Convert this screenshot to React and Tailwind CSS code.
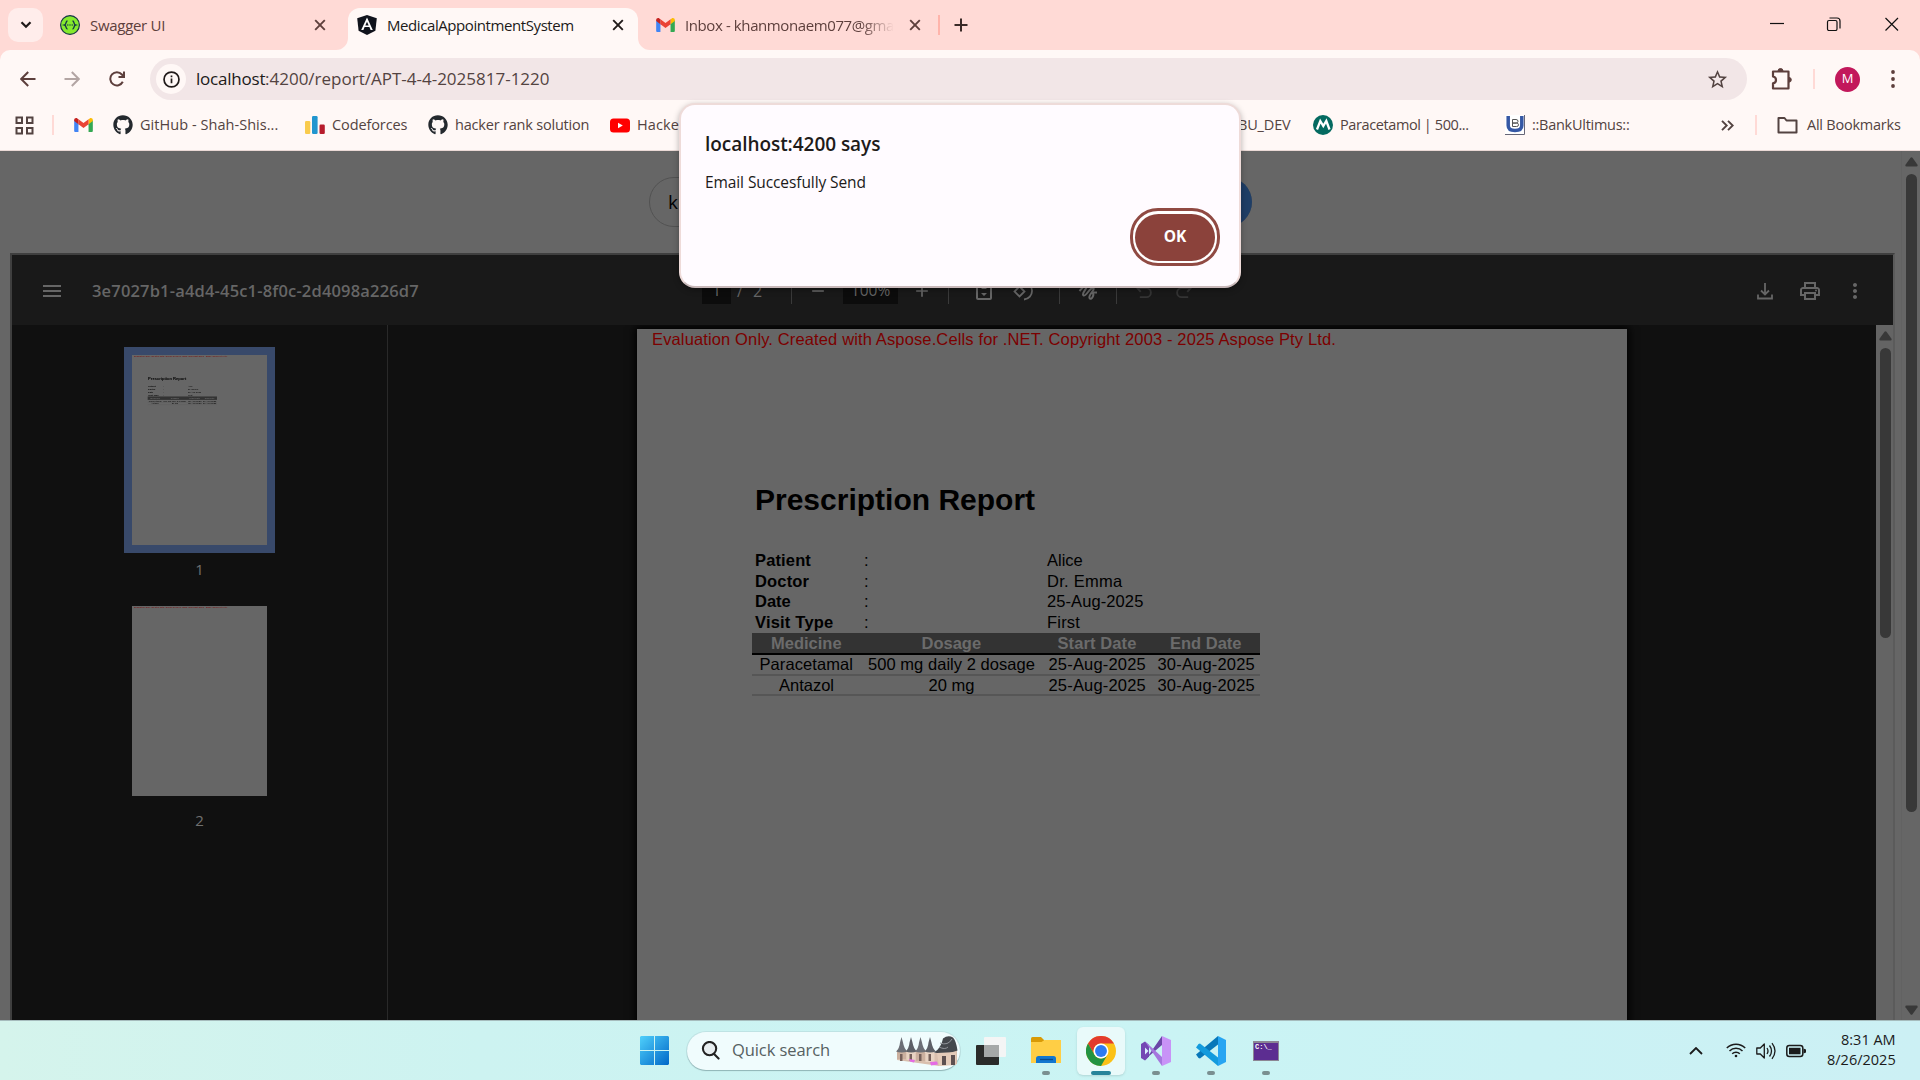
import React, { useLayoutEffect, useRef, useState } from "react";
import { FaGithub } from "react-icons/fa";
import { MdMenu, MdOutlinePrint, MdMoreVert, MdAdd, MdRemove, MdStarBorder } from "react-icons/md";

// One line of text whose letter spacing is adjusted to fill a fixed width.
function Fit({ w, className = "", children }) {
  const ref = useRef(null);
  const [spacing, setSpacing] = useState(0);
  useLayoutEffect(() => {
    const natural = ref.current.offsetWidth;
    setSpacing((w - natural) / String(children).length);
  }, [w, children]);
  return (
    <span className={"block shrink-0 whitespace-nowrap " + className} style={{ width: w }}>
      <span ref={ref} className="inline-block" style={{ letterSpacing: spacing }}>
        {children}
      </span>
    </span>
  );
}

function Cross({ className = "" }) {
  return (
    <svg viewBox="0 0 12 12" className={"h-3 w-3 shrink-0 " + className} fill="none" stroke="currentColor" strokeWidth="1.9">
      <path d="M1.2 1.2l9.6 9.6M10.8 1.2L1.2 10.8" />
    </svg>
  );
}

function Gmail({ className = "" }) {
  return (
    <svg viewBox="0 0 24 18" className={"shrink-0 " + className}>
      <path d="M0 3v13.4C0 17.300.7 18 1.600 18H5.500V8L2.600 3z" fill="#4285f4" />
      <path d="M18.500 18h3.900c.9 0 1.600-.7 1.600-1.600V3l-3 1-2.500 4z" fill="#34a853" />
      <path d="M18.500 1.600V8L24 4V2.500c0-2-2.300-3.200-4-2z" fill="#fbbc04" />
      <path d="M5.500 8V1.500L12 6.400l6.500-4.900V8L12 13z" fill="#ea4335" />
      <path d="M0 2.500V4l5.500 4V1.500L4 .5C2.300-.7 0 .5 0 2.500z" fill="#c5221f" />
    </svg>
  );
}

function Swagger() {
  return (
    <svg viewBox="0 0 20 20" className="h-5 w-5 shrink-0" fill="none" stroke="#173647">
      <circle cx="10" cy="10" r="9.400" fill="#85ea2d" strokeWidth="1.200" />
      <path d="M7.500 6C5.500 6 6.500 9.500 4.600 10c1.900.5.9 4 2.900 4M12.500 6c2 0 1 3.500 2.900 4-1.900.5-.9 4-2.900 4" strokeWidth="1.400" />
      <path d="M7.300 10h1M9.500 10h1M11.700 10h1" strokeWidth="1.300" />
    </svg>
  );
}

function Angular() {
  return (
    <svg viewBox="0 0 20 20" className="h-5 w-5 shrink-0">
      <path d="M10 0l9.800 3.300-1.400 12.400L10 20l-8.400-4.300L.2 3.300z" fill="#10131c" />
      <path d="M10 2.500L4.200 15h2.200l1.200-2.900h4.800l1.200 2.900h2.200zm0 4.200l1.700 3.700H8.300z" fill="#fff" />
    </svg>
  );
}

function Bar({ className = "" }) {
  return <div className={"shrink-0 " + className} />;
}

function TabStrip() {
  return (
    <div className="flex h-[50px] bg-[#ffdad6] pl-2 text-[15px] text-[#5d3f3c]">
      <div className="mt-2 flex h-[34px] w-[35px] items-center justify-center rounded-[10px] bg-[#ffedeb]">
        <svg viewBox="0 0 12 8" className="h-2 w-3" fill="none" stroke="#201a19" strokeWidth="2.200"><path d="M1.500 1.200L6 5.800l4.500-4.600" /></svg>
      </div>
      <div className="ml-[17px] flex w-[288px] items-center">
        <Swagger />
        <Fit w={75} className="ml-[10px]">Swagger UI</Fit>
        <Cross className="ml-[149px]" />
      </div>
      <div className="relative mt-2 flex h-[42px] w-[290px] items-center rounded-t-[12px] bg-[#fff8f6] pb-2 pl-[9px] text-[#201a19]">
        <svg viewBox="0 0 12 12" className="absolute -left-3 bottom-0 h-3 w-3" fill="#fff8f6"><path d="M12 0v12H0A12 12 0 0 0 12 0" /></svg>
        <svg viewBox="0 0 12 12" className="absolute -right-3 bottom-0 h-3 w-3" fill="#fff8f6"><path d="M0 0v12h12A12 12 0 0 1 0 0" /></svg>
        <Angular />
        <Fit w={187} className="ml-[10px]">MedicalAppointmentSystem</Fit>
        <Cross className="ml-[38px]" />
      </div>
      <div className="flex items-center pl-[18px]">
        <Gmail className="h-[14px] w-[19px]" />
        <Fit w={209} className="ml-[10px] [mask-image:linear-gradient(to_right,black_84%,transparent)]">Inbox - khanmonaem077@gma</Fit>
        <Cross className="ml-[15px]" />
        <Bar className="ml-[17px] h-5 w-[2px] bg-[#ffb4ab]" />
        <svg viewBox="0 0 14 14" className="ml-[14px] h-[14px] w-[14px]" stroke="#3a2a28" strokeWidth="2"><path d="M7 .5v13M.5 7h13" /></svg>
      </div>
      <svg viewBox="0 0 130 14" className="ml-auto mr-[21px] mt-[17px] h-[14px] w-[130px]" fill="none" stroke="#111" strokeWidth="1.200">
        <path d="M1 6.500h14" />
        <rect x="58.500" y="3.500" width="9.500" height="10" rx="1.500" />
        <path d="M60.500 1h7.500a3 3 0 0 1 3 3v7.500" />
        <path d="M116.500 1l12.500 12.500M129 1l-12.500 12.500" />
      </svg>
    </div>
  );
}

function AddressRow() {
  return (
    <div className="flex h-[58px] items-center bg-[#fff8f6] rounded-t-[10px] text-[#5d3f3c]">
      <svg viewBox="0 0 16 16" className="ml-5 h-4 w-4" fill="none" stroke="currentColor" strokeWidth="2"><path d="M15.500 8H1.500M8.200 1L1.200 8l7 7" /></svg>
      <svg viewBox="0 0 16 16" className="ml-[28px] h-4 w-4 text-[#b3a5a3]" fill="none" stroke="currentColor" strokeWidth="2"><path d="M.5 8h14M7.800 1l7 7-7 7" /></svg>
      <svg viewBox="0 0 16 16" className="ml-[29px] h-4 w-4" fill="none" stroke="currentColor" strokeWidth="2"><path d="M13.800 10.800A6.600 6.600 0 1 1 12.900 3.500L14.600 5.500" /><path d="M15 .5V6H9.500" /></svg>
      <div className="ml-[25px] flex h-[42px] w-[1597px] items-center rounded-full bg-[#f2e6e7] pl-[6px]">
        <div className="flex h-[30px] w-[30px] items-center justify-center rounded-full bg-[#fff8f6]">
          <svg viewBox="0 0 18 18" className="h-[17px] w-[17px]" fill="none" stroke="#201a19" strokeWidth="1.800"><circle cx="9" cy="9" r="7.900" /><path d="M9 8v5M9 4.800v1.900" /></svg>
        </div>
        <div className="ml-[10px] flex text-[17px]">
          <Fit w={69} className="text-[#201a19]">localhost</Fit>
          <Fit w={285} className="text-[#534341]">:4200/report/APT-4-4-2025817-1220</Fit>
        </div>
        <MdStarBorder className="ml-auto mr-[18px] h-[23px] w-[23px] text-[#534341]" />
      </div>
      <svg viewBox="0 0 22 24" className="ml-[24px] h-6 w-[22px]" fill="none" stroke="currentColor" strokeWidth="2.200">
        <path d="M2 4.500h15.500v17H2v-5.200c4-.8 4-6 0-6.800z" strokeLinejoin="round" />
        <path d="M7 4a2.500 2.500 0 0 1 5 0zM18 10.500a2.300 2.300 0 0 1 0 4.600z" fill="currentColor" strokeWidth="1" />
      </svg>
      <Bar className="ml-[20px] h-5 w-[2px] bg-[#ffdad6]" />
      <div className="ml-[20px] flex h-[25px] w-[25px] items-center justify-center rounded-full bg-[#c2185b] text-[13px] text-white">M</div>
      <svg viewBox="0 0 4 18" className="ml-[31px] h-[18px] w-1" fill="currentColor"><circle cx="2" cy="2" r="1.900" /><circle cx="2" cy="9" r="1.900" /><circle cx="2" cy="16" r="1.900" /></svg>
    </div>
  );
}

function Bookmarks() {
  return (
    <div className="flex h-[43px] items-center border-b border-[#ead9d6] bg-[#fff8f6] pb-[8px] text-[14.500px] text-[#534341]">
      <svg viewBox="0 0 19 19" className="ml-[15px] h-[19px] w-[19px]" fill="none" stroke="currentColor" strokeWidth="2"><path d="M1.500 1.500h5.500v5.500H1.500zM12 1.500h5.500v5.500H12zM1.500 12h5.500v5.500H1.500zM12 12h5.500v5.500H12z" /></svg>
      <Bar className="ml-[18px] h-5 w-[2px] bg-[#ffdad6]" />
      <Gmail className="ml-[20px] h-[14px] w-[19px]" />
      <FaGithub className="ml-[20px] h-5 w-5 text-[#24292e]" />
      <Fit w={138} className="ml-[7px]">GitHub - Shah-Shis...</Fit>
      <svg viewBox="0 0 20 20" className="ml-[27px] h-5 w-5"><rect y="6" width="5.300" height="13" rx="1.200" fill="#f9cb4c" /><rect x="7" y="1" width="5.600" height="18" rx="1.200" fill="#2196cf" /><rect x="14.500" y="9.500" width="5.300" height="9.500" rx="1.200" fill="#b71c2c" /></svg>
      <Fit w={75} className="ml-[7px]">Codeforces</Fit>
      <FaGithub className="ml-[21px] h-5 w-5 text-[#24292e]" />
      <Fit w={134} className="ml-[7px]">hacker rank solution</Fit>
      <svg viewBox="0 0 20 14" className="ml-[21px] h-[15px] w-5"><rect width="20" height="14" rx="3.500" fill="#f00" /><path d="M8 4.300v5.400l4.800-2.700z" fill="#fff" /></svg>
      <Fit w={82} className="ml-[7px]">HackerRank</Fit>
      <Fit w={53} className="ml-[519px]">BU_DEV</Fit>
      <svg viewBox="0 0 20 20" className="ml-[22px] h-5 w-5"><circle cx="10" cy="10" r="10" fill="#046a60" /><path d="M4 14.500L7.300 6l3 5 3-5 3.200 8.500" fill="none" stroke="#fff" strokeWidth="2.300" /></svg>
      <Fit w={129} className="ml-[7px]">Paracetamol | 500...</Fit>
      <svg viewBox="0 0 20 20" className="ml-[36px] h-5 w-5"><path d="M0 0h20v20H0z" fill="#fff" /><path d="M19.500 0v19.500H0" fill="none" stroke="#667" /><path d="M3.200 1v9.500q0 5 6.800 5t6.800-5V1" fill="none" stroke="#3558a5" strokeWidth="3.500" /><path d="M7.500 4.500h3.500q2 0 2 1.800t-2 1.800H7.500zM7.500 8h4q2 0 2 1.800t-2 1.700h-4z" fill="none" stroke="#555" /></svg>
      <Fit w={97} className="ml-[7px]">::BankUltimus::</Fit>
      <svg viewBox="0 0 13 11" className="ml-[92px] h-[11px] w-[13px]" fill="none" stroke="currentColor" strokeWidth="1.900"><path d="M1 .8l4.700 4.700L1 10.200M7 .8l4.700 4.700L7 10.200" /></svg>
      <Bar className="ml-[21px] h-5 w-[2px] bg-[#ffdad6]" />
      <svg viewBox="0 0 21 17" className="ml-[20px] h-[17px] w-[21px]" fill="none" stroke="currentColor" strokeWidth="2"><path d="M1.500 1h6l2 2.500h10V15.500h-18z" strokeLinejoin="round" /></svg>
      <Fit w={94} className="ml-[9px]">All Bookmarks</Fit>
    </div>
  );
}

const patient = [
  ["Patient", "Alice", 56, 36],
  ["Doctor", "Dr. Emma", 54, 75],
  ["Date", "25-Aug-2025", 36, 96],
  ["Visit Type", "First", 78, 33],
];
const heads = [["Medicine", 71], ["Dosage", 60], ["Start Date", 79], ["End Date", 72]];
const rows = [
  [["Paracetamal", 94], ["500 mg daily 2 dosage", 167], ["25-Aug-2025", 97], ["30-Aug-2025", 97]],
  [["Antazol", 55], ["20 mg", 46], ["25-Aug-2025", 97], ["30-Aug-2025", 97]],
];

function Sheet({ blank }) {
  return (
    <div className="h-[1396px] w-[990px] shrink-0 overflow-hidden bg-[#666] font-['Liberation_Sans',Arial,sans-serif] text-[16.500px] leading-5 text-black">
      <Fit w={684} className="ml-[15px] text-[#7c0000]">Evaluation Only. Created with Aspose.Cells for .NET. Copyright 2003 - 2025 Aspose Pty Ltd.</Fit>
      {!blank && (
        <div className="ml-[115px] mt-[130px] w-[508px]">
          <Fit w={280} className="ml-[3px] text-[30px] font-bold leading-[42px]">Prescription Report</Fit>
          <div className="mt-[29px] pb-px">
            {patient.map(([k, v, a, b]) => (
              <div key={k} className="flex h-[20.500px] items-center pl-[3px]">
                <div className="w-[108px] font-bold"><Fit w={a}>{k}</Fit></div>
                <div className="w-[184px] pl-px">:</div>
                <Fit w={b}>{v}</Fit>
              </div>
            ))}
          </div>
          <div className="grid h-[22px] grid-cols-[109px_181px_110px_108px] justify-items-center border-b-2 border-black bg-[#333] font-bold text-[#6b6b6b]">
            {heads.map(([t, w]) => <Fit key={t} w={w}>{t}</Fit>)}
          </div>
          {rows.map((r, i) => (
            <div key={i} className="grid h-[20.500px] grid-cols-[109px_181px_110px_108px] justify-items-center border-b-2 border-[#565656] leading-[18px]">
              {r.map(([t, w]) => <Fit key={t} w={w}>{t}</Fit>)}
            </div>
          ))}
        </div>
      )}
    </div>
  );
}

function Thumb({ blank }) {
  return (
    <div className="h-[190px] w-[135px] overflow-hidden bg-[#666]">
      <div className="origin-top-left scale-[0.1364]"><Sheet blank={blank} /></div>
    </div>
  );
}

function Triangle({ down }) {
  return (
    <svg viewBox="0 0 13 10" className={"h-[10px] w-[13px] shrink-0 " + (down ? "rotate-180" : "")} fill="#383838"><path d="M5.500.8q1-1.200 2 0l5 7q.6 1.700-1 1.700h-10q-1.600 0-1-1.700z" /></svg>
  );
}

function PdfToolbar() {
  return (
    <div className="flex h-[70px] shrink-0 items-center bg-[#191919] pt-[2px] text-[#666]">
      <MdMenu className="ml-[28px] h-6 w-6" />
      <Fit w={327} className="ml-[28px] text-[16.500px] font-semibold">3e7027b1-a4d4-45c1-8f0c-2d4098a226d7</Fit>
      <div className="ml-[283px] flex items-center text-[16px]">
        <div className="h-[26px] w-[29px] bg-[#0c0c0c] text-center leading-[24px]">1</div>
        <div className="ml-[6px]">/</div>
        <div className="ml-[10px]">2</div>
        <Bar className="ml-[29px] h-[26px] w-px bg-[#3a3a3a]" />
        <MdRemove className="ml-[16px] h-5 w-5" />
        <div className="ml-[15px] h-[26px] w-[55px] bg-[#0c0c0c] text-center text-[15.500px] leading-[24px]">100%</div>
        <MdAdd className="ml-[14px] h-5 w-5" />
        <Bar className="ml-[16px] h-[26px] w-px bg-[#3a3a3a]" />
        <svg viewBox="0 0 16 18" className="ml-[27px] h-[18px] w-4" fill="none" stroke="currentColor" strokeWidth="2"><rect x="1" y="1" width="14" height="16" rx="1" /><path d="M5 11h6l-3 3zM5 7h6L8 4z" fill="currentColor" stroke="none" /></svg>
        <svg viewBox="0 0 22 22" className="ml-[21px] h-[22px] w-[22px]" fill="none" stroke="currentColor" strokeWidth="1.800"><path d="M6.500 6.500l5 5-5 5-5-5z" /><path d="M10 2.500a8.500 8.500 0 1 1 1 17M13 0l-3 2.500 3 3" /></svg>
        <Bar className="ml-[24px] h-[26px] w-px bg-[#3a3a3a]" />
        <svg viewBox="0 0 20 20" className="ml-[18px] h-5 w-5" fill="none" stroke="currentColor" strokeWidth="2"><path d="M1.500 10C5 6 8 3 9 4.500S3 13 5.500 14.500 12 6 15 7s-5 7-3.500 10 5.500-3 3-5.500" /><path d="M14 11.500h5" /></svg>
        <Bar className="ml-[18px] h-[26px] w-px bg-[#3a3a3a]" />
        <svg viewBox="0 0 18 16" className="ml-[19px] h-4 w-[17px] text-[#343434]" fill="none" stroke="currentColor" strokeWidth="2"><path d="M5 1L1.500 5 5 9M2 5h9a4.700 4.700 0 0 1 0 9.500H4" /></svg>
        <svg viewBox="0 0 18 16" className="ml-[22px] h-4 w-[17px] text-[#343434]" fill="none" stroke="currentColor" strokeWidth="2"><path d="M13 1l3.500 4L13 9M16 5H7a4.700 4.700 0 0 0 0 9.500h7" /></svg>
      </div>
      <svg viewBox="0 0 16 18" className="ml-auto h-[18px] w-4" fill="none" stroke="currentColor" strokeWidth="1.800"><path d="M8 1v11M4 8.500l4 4 4-4M1 12.500V16.500h14v-4" /></svg>
      <MdOutlinePrint className="ml-[25px] h-6 w-6" />
      <MdMoreVert className="ml-[21px] mr-[26px] h-6 w-6" />
    </div>
  );
}

function Viewer() {
  return (
    <div className="ml-[10px] flex h-[767px] w-[1885px] shrink-0 flex-col border-2 border-b-0 border-[#3f3f3f] border-r-[#5b5b5b] bg-[#101010]">
      <PdfToolbar />
      <div className="flex min-h-0 flex-1">
        <div className="flex w-[376px] flex-col items-center border-r border-[#292929] text-[15px] text-[#707070]">
          <div className="mt-[22px] border-8 border-[#38496a]"><Thumb /></div>
          <div className="mt-[6px] leading-5">1</div>
          <div className="mt-[27px]"><Thumb blank /></div>
          <div className="mt-[14px] leading-5">2</div>
        </div>
        <div className="min-w-0 flex-1 overflow-hidden pl-[249px] pt-1">
          <div className="w-[990px] shadow-[0_0_8px_2px_#000]"><Sheet /></div>
        </div>
        <div className="flex w-[17px] flex-col items-center bg-[#646464] pl-px pt-[6px]">
          <Triangle />
          <div className="mt-[7px] h-[290px] w-[11px] rounded-full bg-[#383838]" />
        </div>
      </div>
    </div>
  );
}

function PageBody() {
  return (
    <div className="flex h-[869px] overflow-hidden bg-[#666]">
      <div className="w-[1901px]">
        <div className="flex h-[102px] justify-center pt-[26px]">
          <div className="flex h-[50px] w-[603px] items-center justify-between rounded-full border border-[#525252] pl-[18px] text-[19px] font-medium text-black">
            <span>khanmonaem077@gmail.com</span>
            <div className="-mr-px h-[50px] w-[110px] rounded-full bg-[#1f3e66]" />
          </div>
        </div>
        <Viewer />
      </div>
      <div className="flex w-[19px] flex-col items-center border-l border-[#626262] pb-[5px] pt-[6px]">
        <Triangle />
        <div className="mt-[7px] h-[638px] w-[11px] rounded-full bg-[#383838]" />
        <div className="mt-auto"><Triangle down /></div>
      </div>
    </div>
  );
}

function Alert() {
  return (
    <div className="absolute left-[679px] top-[103px] flex h-[185px] w-[562px] flex-col rounded-[16px] border-2 border-[#eedbd9] border-b-[#c8b8b9] bg-[#fffbff] pl-[24px] pt-[25px] text-[#201a19] shadow-[0_2px_6px_rgba(0,0,0,0.3)]">
      <Fit w={175} className="text-[19px] font-semibold leading-[29px]">localhost:4200 says</Fit>
      <Fit w={161} className="mt-[11px] text-[15.500px] leading-6">Email Succesfully Send</Fit>
      <div className="ml-auto mr-[19px] mt-[14px] flex h-[58px] w-[90px] items-center justify-center rounded-[28px] border-[3px] border-[#904a43] bg-white">
        <div className="flex h-[47px] w-[80px] items-center justify-center rounded-[24px] bg-[#8b423b] text-[15.500px] font-bold text-white">OK</div>
      </div>
    </div>
  );
}

function WindowsLogo() {
  return (
    <svg viewBox="0 0 29 29" className="h-[29px] w-[29px]">
      <defs><linearGradient id="win" gradientUnits="userSpaceOnUse" x1="0" y1="0" x2="29" y2="29"><stop stopColor="#4fd0fb" /><stop offset="1" stopColor="#0067c8" /></linearGradient></defs>
      <path d="M1 0h13v14H0V1zM15 0h13l1 1v13H15zM0 15h14v14H1l-1-1zM15 15h14v13l-1 1H15z" fill="url(#win)" />
    </svg>
  );
}

const houses = [0, 9.5, 19, 28.5];
function Village() {
  return (
    <svg viewBox="0 0 62 32" className="h-8 w-[62px]">
      <path d="M1 16l40 2 20-4v15l-18 2L1 25z" fill="#d9bfae" />
      {houses.map((x, i) => (
        <g key={x}>
          <path d={`M${x + 1} 15h9v${9 + i}h-9z`} fill={i % 2 ? "#e8d3c3" : "#cbb09f"} />
          <path d={`M${x} 16.500q3.500-3 4-9l1.500-5.500 1.500 5.500q1 6 4.500 9-6 2-11.500 0z`} fill={i % 2 ? "#5d6067" : "#6c6f76"} />
          <path d={`M${x + 4} 19h2.500v7H${x + 4}z`} fill="#75605a" />
        </g>
      ))}
      <path d="M38 17.500q7-4 9-14 5-4 10-1 3 3 4.500 13-12 5-23.500 2z" fill="#44474c" />
      <path d="M41 18l19-1v13l-17 1z" fill="#e4cbb9" />
      <path d="M46 21h4v9h-4zM55 20h4v10h-4z" fill="#5d5050" />
      <path d="M44 8q8 3 12-4M43 12q6 3 9 0" stroke="#91949a" fill="none" />
      <path d="M13 24l6 1-1 2.500-4-1zM34 27l7-.5 1 3-7 1z" fill="#e46be4" />
    </svg>
  );
}

function Chrome() {
  return (
    <svg viewBox="0 0 48 48" className="h-[30px] w-[30px]">
      <circle cx="24" cy="24" r="24" fill="#fbc116" />
      <path d="M3.200 12A24 24 0 0 1 44.800 12H24a12 12 0 0 0-10.400 18z" fill="#e33b2e" />
      <path d="M3.200 12A24 24 0 0 0 24 48l10.400-18a12 12 0 0 1-20.800 0z" fill="#229342" />
      <circle cx="24" cy="24" r="12" fill="#fff" /><circle cx="24" cy="24" r="9.500" fill="#2d7bf0" />
    </svg>
  );
}

function TaskItem({ active, idle, children }) {
  return (
    <div className={"flex h-12 w-12 shrink-0 flex-col items-center rounded-md pt-[9px] " + (active ? "bg-[#e9fafa] shadow-sm" : "")}>
      <div className="flex h-[30px] items-center">{children}</div>
      {!idle && <div className={"mt-[5px] h-1 rounded-full " + (active ? "w-5 bg-[#27849a]" : "w-2 bg-[#7a8f90]")} />}
    </div>
  );
}

function Taskbar() {
  return (
    <div className="flex h-[60px] items-center border-t border-[#a6bcbd] bg-[linear-gradient(90deg,#d5f4ec_0%,#cdf3f1_25%,#caf4f4_60%,#ccf0f4_100%)] text-[#1b1b1b]">
      <div className="ml-[640px]"><WindowsLogo /></div>
      <div className="ml-[18px] flex h-[38px] w-[273px] items-center rounded-full bg-[#f0fcfd] pl-[14px] shadow-[0_1px_1px_#8fb5b6,0_0_0_1px_#bfe3e4]">
        <svg viewBox="0 0 20 20" className="h-[19px] w-[19px]" fill="none" stroke="#222" strokeWidth="2.200"><circle cx="9" cy="8" r="7" fill="#e7eef0" /><path d="M13.500 13.500l5 5" strokeLinecap="round" /></svg>
        <Fit w={98} className="ml-[12px] text-[16.500px] text-[#566162]">Quick search</Fit>
        <div className="ml-auto mr-[2px]"><Village /></div>
      </div>
      <div className="ml-[7px] flex gap-[7px]">
        <TaskItem idle>
          <svg viewBox="0 0 30 28" className="h-7 w-[30px]"><rect y="8" width="23" height="20" rx="1" fill="#2a2b2a" /><rect x="8" width="22" height="20" rx="1" fill="#f4f5f5" /><path d="M8 8h15v12H8z" fill="#a5a8a8" /></svg>
        </TaskItem>
        <TaskItem>
          <svg viewBox="0 0 30 27" className="h-[27px] w-[30px]"><path d="M0 1.500Q0 0 1.500 0H10l3 3v5H0z" fill="#d99a06" /><path d="M0 5h10.500l3-2H30v23H0z" fill="#ffce45" /><path d="M5 26v-4.500Q5 19 7.500 19h15q2.500 0 2.500 2.500V26z" fill="#1277cf" /><path d="M9 22.500h13" stroke="#0a4a8c" strokeWidth="1.300" /></svg>
        </TaskItem>
        <TaskItem active><Chrome /></TaskItem>
        <TaskItem>
          <svg viewBox="0 0 30 30" className="h-[30px] w-[30px]"><path d="M0 8l4-2.500L8 9v11.500l-4 4L0 22z" fill="#7447b4" /><path d="M4 11.500v7l3.500-3.500z" fill="#d9efff" /><path d="M4 24.500L21 0v9L7.500 20.500z" fill="#6b46a8" /><path d="M4 5.500L21 30v-9L8 9z" fill="#a577de" /><path d="M21 0l9 4v22l-9 4z" fill="#c893f7" /></svg>
        </TaskItem>
        <TaskItem>
          <svg viewBox="0 0 30 30" className="h-[30px] w-[30px]"><path d="M0 18.500L22 0v8.500L4 22.500l-1.500-.5z" fill="#0877b9" /><path d="M0 11.500L22 30v-8.500L4 7.500 2.500 8z" fill="#139bdd" /><path d="M22 0l8 4v22l-8 4z" fill="#27a5f2" /></svg>
        </TaskItem>
        <TaskItem>
          <div className="h-5 w-[26px] border border-[#8c8794] border-t-2 bg-[#5c2d91] pl-px font-['Liberation_Mono',monospace] text-[7px] font-bold leading-[9px] text-white">C:\_</div>
        </TaskItem>
      </div>
      <svg viewBox="0 0 14 8" className="ml-auto h-2 w-[14px]" fill="none" stroke="currentColor" strokeWidth="1.800"><path d="M1 7l6-6 6 6" /></svg>
      <svg viewBox="0 0 20 15" className="ml-[23px] h-[15px] w-5" fill="none" stroke="currentColor" strokeWidth="1.500"><path d="M.8 5a13 13 0 0 1 18.400 0M3.500 8a9.200 9.200 0 0 1 13 0M6.200 10.700a5.400 5.400 0 0 1 7.600 0" /><circle cx="10" cy="13" r="1.300" fill="currentColor" stroke="none" /></svg>
      <svg viewBox="0 0 20 18" className="ml-[10px] h-[18px] w-5" fill="none" stroke="currentColor" strokeWidth="1.300"><path d="M.8 6h3.500l4-4v14l-4-4H.8z" strokeLinejoin="round" /><path d="M11 6q2 3 0 6M13.500 3.500q4 5.500 0 11M16 1.200q6 7.800 0 15.600" /></svg>
      <svg viewBox="0 0 20 14" className="ml-[10px] h-[14px] w-5"><rect x=".8" y="1.500" width="16" height="11" rx="2.500" fill="none" stroke="currentColor" strokeWidth="1.500" /><path d="M3 3.800h11.500v6.500H3z" fill="currentColor" /><path d="M17.500 4.500l2.500 1v3l-2.500 1z" fill="currentColor" /></svg>
      <div className="mb-[2px] ml-[21px] mr-6 flex flex-col items-end text-[14.500px] leading-5">
        <Fit w={55}>8:31 AM</Fit>
        <Fit w={69}>8/26/2025</Fit>
      </div>
    </div>
  );
}

export default function App() {
  return (
    <div className="relative h-[1080px] w-[1920px] overflow-hidden bg-[#ffdad6] font-['Open_Sans','Noto_Sans',sans-serif]">
      <TabStrip />
      <AddressRow />
      <Bookmarks />
      <PageBody />
      <Taskbar />
      <Alert />
    </div>
  );
}
